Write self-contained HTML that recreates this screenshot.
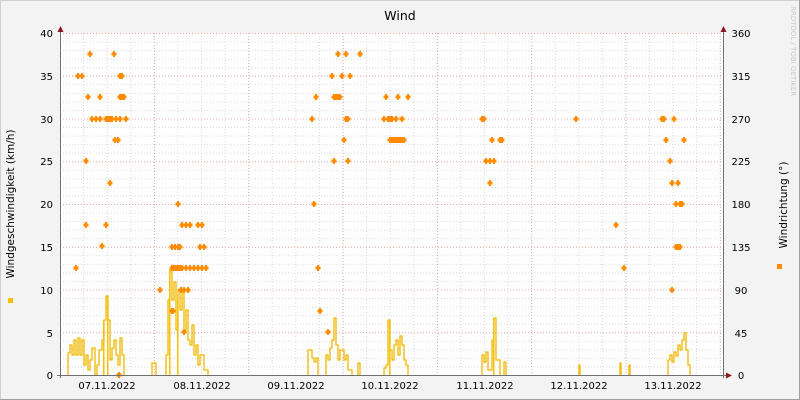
<!DOCTYPE html>
<html><head><meta charset="utf-8"><style>
html,body{margin:0;padding:0;background:#f3f3f3;}
svg{display:block;font-family:"DejaVu Sans","Liberation Sans",sans-serif;}
</style></head><body>
<svg width="800" height="400" viewBox="0 0 800 400" xmlns="http://www.w3.org/2000/svg">
<defs>
<pattern id="hmin" x="0" y="33" width="800" height="8.55" patternUnits="userSpaceOnUse">
<line x1="0" y1="0.5" x2="800" y2="0.5" stroke="#d8d8d8" stroke-dasharray="1,2"/></pattern>
<pattern id="vmin" x="59.5" y="0" width="23.58" height="400" patternUnits="userSpaceOnUse">
<line x1="0.5" y1="0" x2="0.5" y2="400" stroke="#d8d8d8" stroke-dasharray="1,2"/></pattern>
<pattern id="hmaj" x="0" y="33" width="800" height="42.75" patternUnits="userSpaceOnUse">
<line x1="0" y1="0.5" x2="800" y2="0.5" stroke="#e8a8a8" stroke-dasharray="1,2"/></pattern>
<pattern id="vmaj" x="154" y="0" width="94.3" height="400" patternUnits="userSpaceOnUse">
<line x1="0.5" y1="0" x2="0.5" y2="400" stroke="#e8a8a8" stroke-dasharray="1,2"/></pattern>
<path id="m" d="M-1,-3h2v1.5h1.5v3h-1.5v1.5h-2v-1.5h-1.5v-3h1.5z" fill="#ff8c00"/>
</defs>
<rect x="0" y="0" width="800" height="400" fill="#f3f3f3"/>
<path d="M0.5,400V0.5H799" stroke="#d0d0d0" fill="none"/>
<path d="M799.5,0V399.5H0" stroke="#a0a0a0" fill="none"/>
<rect x="61" y="33" width="662" height="342" fill="#fff"/>
<rect x="61" y="33" width="662" height="342" fill="url(#vmin)"/>
<rect x="61" y="33" width="662" height="342" fill="url(#hmin)"/>
<rect x="61" y="33" width="662" height="342" fill="url(#vmaj)"/>
<rect x="61" y="33" width="662" height="342" fill="url(#hmaj)"/>
<g fill="none" stroke="#f2b800" stroke-width="1.3">
<path d="M68,375V353H70V345H72V355H74V340H76V355H78V338H80V355H82V340H84V365H86V355H88V370H90V360H92V348H95V375H97V365H99V350H102V340H104V320H106V296H108V320H110V360H112V348H114V340H116V355H118V365H120V338H122V355H124V375"/>
<path d="M152,375V363H156V375M166,375V355H168V300H170V270H172V300H174V282H176V330H178V290H180V310H182V292H184V330H186V310H188V340H190V345H192V325H194V355H196V345H198V365H200V355H204V370H208V375"/>
<path d="M308,375V350H312V358H314V362H316V358H318V375M326,375V355H328V360H330V348H332V340H334V318H336V345H338V360H340V350H344V360H346V355H348V370H352V375M358,375V363H360V375"/>
<path d="M384,375V368H386V365H388V320H390V350H392V360H394V345H396V340H398V355H400V336H402V345H404V360H406V365H408V375"/>
<path d="M482,375V355H484V362H486V352H488V370H492V340H494V318H496V360H500V375M504,375V362H506V375"/>
<path d="M579,375V365H580V375M620,375V363H621V375M629,375V365H630V375"/>
<path d="M668,375V360H670V355H672V362H674V352H676V356H678V345H680V350H682V340H684V333H686V350H688V365H690V375"/>
</g>
<g fill="#f5c200">
<rect x="103" y="320" width="1.5" height="55"/><rect x="107" y="296" width="1.5" height="79"/>
<rect x="169" y="270" width="1.5" height="105"/><rect x="177" y="300" width="1.5" height="75"/>
<rect x="389" y="320" width="1.5" height="55"/><rect x="493" y="318" width="1.5" height="57"/>
</g>
<g>
<use href="#m" x="76" y="268"/><use href="#m" x="78" y="76"/><use href="#m" x="82" y="76"/><use href="#m" x="86" y="225"/><use href="#m" x="86" y="161"/><use href="#m" x="88" y="97"/><use href="#m" x="90" y="54"/><use href="#m" x="92" y="119"/><use href="#m" x="96" y="119"/><use href="#m" x="100" y="97"/><use href="#m" x="100" y="119"/><use href="#m" x="102" y="246"/><use href="#m" x="106" y="225"/><use href="#m" x="106" y="119"/><use href="#m" x="110" y="183"/><use href="#m" x="112" y="119"/><use href="#m" x="114" y="54"/><use href="#m" x="115" y="140"/><use href="#m" x="116" y="119"/><use href="#m" x="118" y="140"/><use href="#m" x="120" y="76"/><use href="#m" x="120" y="97"/><use href="#m" x="120" y="119"/><use href="#m" x="122" y="76"/><use href="#m" x="122" y="97"/><use href="#m" x="124" y="97"/><use href="#m" x="126" y="119"/><use href="#m" x="110" y="119"/><use href="#m" x="108" y="119"/><use href="#m" x="119" y="375"/>
<use href="#m" x="160" y="290"/><use href="#m" x="172" y="311"/><use href="#m" x="172" y="268"/><use href="#m" x="172" y="247"/><use href="#m" x="175" y="247"/><use href="#m" x="178" y="247"/><use href="#m" x="180" y="247"/><use href="#m" x="174" y="268"/><use href="#m" x="176" y="268"/><use href="#m" x="178" y="268"/><use href="#m" x="180" y="268"/><use href="#m" x="182" y="268"/><use href="#m" x="186" y="268"/><use href="#m" x="190" y="268"/><use href="#m" x="194" y="268"/><use href="#m" x="198" y="268"/><use href="#m" x="202" y="268"/><use href="#m" x="206" y="268"/><use href="#m" x="178" y="204"/><use href="#m" x="182" y="225"/><use href="#m" x="186" y="225"/><use href="#m" x="190" y="225"/><use href="#m" x="198" y="225"/><use href="#m" x="202" y="225"/><use href="#m" x="200" y="247"/><use href="#m" x="204" y="247"/><use href="#m" x="181" y="290"/><use href="#m" x="184" y="290"/><use href="#m" x="188" y="290"/><use href="#m" x="173" y="311"/><use href="#m" x="184" y="332"/>
<use href="#m" x="312" y="119"/><use href="#m" x="314" y="204"/><use href="#m" x="316" y="97"/><use href="#m" x="318" y="268"/><use href="#m" x="320" y="311"/><use href="#m" x="328" y="332"/><use href="#m" x="332" y="76"/><use href="#m" x="334" y="97"/><use href="#m" x="336" y="97"/><use href="#m" x="338" y="54"/><use href="#m" x="338" y="97"/><use href="#m" x="340" y="97"/><use href="#m" x="342" y="76"/><use href="#m" x="344" y="140"/><use href="#m" x="346" y="54"/><use href="#m" x="346" y="119"/><use href="#m" x="348" y="119"/><use href="#m" x="350" y="76"/><use href="#m" x="334" y="161"/><use href="#m" x="348" y="161"/><use href="#m" x="360" y="54"/>
<use href="#m" x="384" y="119"/><use href="#m" x="386" y="97"/><use href="#m" x="388" y="119"/><use href="#m" x="390" y="119"/><use href="#m" x="392" y="119"/><use href="#m" x="390" y="140"/><use href="#m" x="392" y="140"/><use href="#m" x="394" y="140"/><use href="#m" x="396" y="140"/><use href="#m" x="398" y="140"/><use href="#m" x="400" y="140"/><use href="#m" x="402" y="140"/><use href="#m" x="404" y="140"/><use href="#m" x="396" y="119"/><use href="#m" x="398" y="97"/><use href="#m" x="402" y="119"/><use href="#m" x="408" y="97"/>
<use href="#m" x="482" y="119"/><use href="#m" x="484" y="119"/><use href="#m" x="486" y="161"/><use href="#m" x="490" y="161"/><use href="#m" x="494" y="161"/><use href="#m" x="492" y="140"/><use href="#m" x="500" y="140"/><use href="#m" x="502" y="140"/><use href="#m" x="490" y="183"/>
<use href="#m" x="576" y="119"/><use href="#m" x="616" y="225"/><use href="#m" x="624" y="268"/>
<use href="#m" x="662" y="119"/><use href="#m" x="664" y="119"/><use href="#m" x="666" y="140"/><use href="#m" x="670" y="161"/><use href="#m" x="672" y="183"/><use href="#m" x="674" y="119"/><use href="#m" x="676" y="204"/><use href="#m" x="678" y="183"/><use href="#m" x="680" y="204"/><use href="#m" x="682" y="204"/><use href="#m" x="676" y="247"/><use href="#m" x="678" y="247"/><use href="#m" x="680" y="247"/><use href="#m" x="672" y="290"/><use href="#m" x="684" y="140"/>
</g>
<g stroke="#707070" fill="none">
<line x1="60.5" y1="30" x2="60.5" y2="378"/>
<line x1="723.5" y1="30" x2="723.5" y2="378"/>
<line x1="57" y1="375.5" x2="727" y2="375.5"/>
</g>
<g fill="#8b1a1a">
<path d="M57.5,32L60.5,26L63.5,32Z"/><path d="M720.5,32L723.5,26L726.5,32Z"/><path d="M726,372.5L732,375.5L726,378.5Z"/>
</g>
<g font-size="10" fill="#000" text-anchor="end">
<text x="53" y="37">40</text><text x="53" y="80">35</text><text x="53" y="123">30</text><text x="53" y="165">25</text><text x="53" y="208">20</text><text x="53" y="251">15</text><text x="53" y="294">10</text><text x="53" y="337">5</text><text x="53" y="379">0</text>
</g>
<g font-size="10" fill="#000" text-anchor="middle">
<text x="741" y="37">360</text><text x="741" y="80">315</text><text x="741" y="123">270</text><text x="741" y="165">225</text><text x="741" y="208">180</text><text x="741" y="251">135</text><text x="741" y="294">90</text><text x="741" y="337">45</text><text x="741" y="379">0</text>
<text x="107" y="389">07.11.2022</text><text x="202" y="389">08.11.2022</text><text x="296" y="389">09.11.2022</text><text x="390" y="389">10.11.2022</text><text x="485" y="389">11.11.2022</text><text x="579" y="389">12.11.2022</text><text x="673" y="389">13.11.2022</text>
<text x="400" y="20" font-size="12.5">Wind</text>
<text transform="translate(14,204) rotate(-90)" font-size="10.5">Windgeschwindigkeit (km/h)</text>
<text transform="translate(787,205) rotate(-90)" font-size="10.5">Windrichtung (°)</text>
<text transform="translate(791,6) rotate(90)" font-size="7" fill="#c8c8c8" text-anchor="start">RRDTOOL / TOBI OETIKER</text>
</g>
<rect x="8" y="298" width="5" height="5" fill="#f5c200"/>
<rect x="777" y="264" width="5" height="5" fill="#ff8c00"/>
</svg>
</body></html>
